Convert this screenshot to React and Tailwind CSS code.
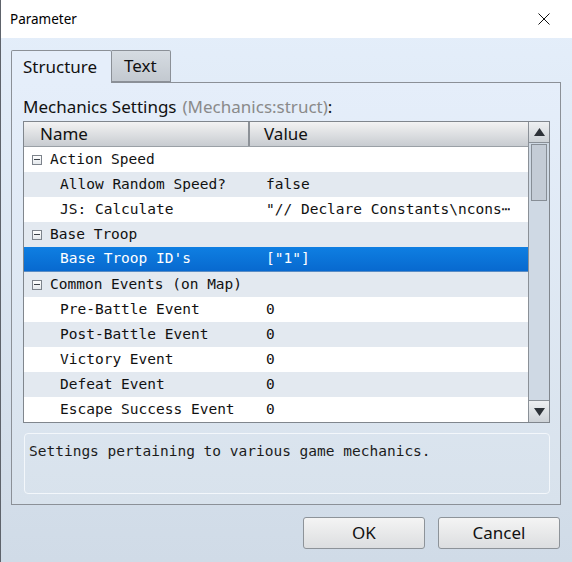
import { Fragment } from "react";

// Plugin parameter editor — struct view with a property grid and OK/Cancel.
const rows = [
  { group: "Action Speed" },
  { name: "Allow Random Speed?", value: "false" },
  { name: "JS: Calculate", value: "\"// Declare Constants\\ncons\u22ef" },
  { group: "Base Troop" },
  { name: "Base Troop ID's", value: "[\"1\"]", selected: true },
  { group: "Common Events (on Map)" },
  { name: "Pre-Battle Event", value: "0" },
  { name: "Post-Battle Event", value: "0" },
  { name: "Victory Event", value: "0" },
  { name: "Defeat Event", value: "0" },
  { name: "Escape Success Event", value: "0" },
];

const sans = "font-['Noto_Sans','Liberation_Sans',sans-serif]";
const mono = "font-['DejaVu_Sans_Mono','Liberation_Mono',monospace] text-[14.5px]";

function Minus() {
  return (
    <span className="w-[10px] h-[10px] border border-[#7d838b] bg-gradient-to-b from-white to-[#e4e8ec] flex items-center justify-center mr-[8px]">
      <span className="w-[6px] h-px bg-[#3b4148]" />
    </span>
  );
}

function Arrow({ down }) {
  return (
    <svg width="11" height="8" viewBox="0 0 11 8">
      <path d={down ? "M0 0 L11 0 L5.5 8 Z" : "M0 8 L11 8 L5.5 0 Z"} fill="#2d3238" />
    </svg>
  );
}

function Grid() {
  return (
    <div className="h-[302px] border border-[#80868d] flex bg-white">
      <div className="flex-1 flex flex-col">
        <div className={`${sans} h-[25px] flex text-[17px] text-[#111] bg-gradient-to-b from-[#f3f3f3] to-[#c8ccd1] border-b border-[#9aa0a6]`}>
          <div className="w-[226px] pl-[16px] flex items-center border-r-2 border-r-[#8c9197]">Name</div>
          <div className="flex-1 pl-[14px] flex items-center">Value</div>
        </div>
        {rows.map((r, i) => {
          const bg = r.selected
            ? "bg-gradient-to-b from-[#0f7fe2] to-[#0869cf] text-white border-b border-[#5a8cc4]"
            : i % 2
            ? "bg-[#e3e9f0] text-[#111]"
            : "bg-white text-[#111]";
          return (
            <div key={i} className={`${mono} h-[25px] flex items-center whitespace-nowrap ${bg}`}>
              {r.group ? (
                <div className="pl-[8px] flex items-center">
                  <Minus />
                  {r.group}
                </div>
              ) : (
                <Fragment>
                  <div className="w-[228px] pl-[36px] shrink-0">{r.name}</div>
                  <div className="pl-[14px] overflow-hidden">{r.value}</div>
                </Fragment>
              )}
            </div>
          );
        })}
      </div>
      <div className="w-[21px] border-l border-[#8a9097] bg-[#cfd9e4] flex flex-col">
        <div className="h-[21px] border-b border-[#8a9097] bg-gradient-to-b from-[#eef0f2] to-[#cdd2d7] flex items-center justify-center">
          <Arrow />
        </div>
        <div className="mx-[2px] mt-px h-[57px] border border-[#878e96] bg-[#c4ccd6]" />
        <div className="flex-1" />
        <div className="h-[22px] border-t border-[#8a9097] bg-gradient-to-b from-[#eef0f2] to-[#cdd2d7] flex items-center justify-center">
          <Arrow down />
        </div>
      </div>
    </div>
  );
}

function Button({ children }) {
  return (
    <button className={`${sans} w-[122px] h-[32px] rounded-[3px] border border-[#8d9399] bg-gradient-to-b from-[#f4f4f4] to-[#dcdee0] text-[17px] text-[#111]`}>
      {children}
    </button>
  );
}

export default function App() {
  return (
    <div className="w-[572px] h-[562px] overflow-hidden bg-[#dfe4ea]">
      <div className="w-[572px] h-full border-l border-[#5e636b] flex flex-col bg-gradient-to-b from-[#e5effb] to-[#d0dbe7]">
        <div className={`${sans} h-[38px] bg-white flex items-center justify-between pl-[9px] pr-[16px] text-[13.5px] text-black`}>
          <span>Parameter</span>
          <svg width="12" height="12" viewBox="0 0 12 12" className="mr-[6px]">
            <path d="M0.5 0.5 L11.5 11.5 M11.5 0.5 L0.5 11.5" stroke="#111" strokeWidth="1" />
          </svg>
        </div>

        <div className="pl-[10px] pt-[12px]">
          <div className={`${sans} flex h-[32px] text-[17px] text-[#111] relative z-10`}>
            <div className="w-[101px] h-[33px] border border-b-0 border-[#8b9097] rounded-t-[2px] bg-[#e5eefa] pl-[11px] flex items-center">
              Structure
            </div>
            <div className="w-[59px] border border-l-0 border-[#8b9097] rounded-tr-[2px] bg-gradient-to-b from-[#d6dce2] to-[#c3c9d0] pl-[12px] flex items-center">
              Text
            </div>
          </div>

          <div className="w-[550px] h-[423px] border border-[#8b9097] bg-gradient-to-b from-[#e5eefa] to-[#d8e2ec] pl-[11px] pr-[10px] pt-[14px]">
            <div className={`${sans} h-[20px] flex items-center text-[17px] text-[#111] mb-[4px] whitespace-nowrap`}>
              Mechanics Settings<span className="text-[#8a8a8a] ml-[6px]">(Mechanics:struct)</span>:
            </div>
            <Grid />
            <div className={`${mono} mt-[10px] ml-px h-[61px] rounded-[4px] border border-[#f3f7fb] pl-[4px] pt-[7px] text-[#1c1c1c]`}>
              Settings pertaining to various game mechanics.
            </div>
          </div>

          <div className="flex justify-end gap-[13px] mt-[12px] w-[549px]">
            <Button>OK</Button>
            <Button>Cancel</Button>
          </div>
        </div>
      </div>
    </div>
  );
}
